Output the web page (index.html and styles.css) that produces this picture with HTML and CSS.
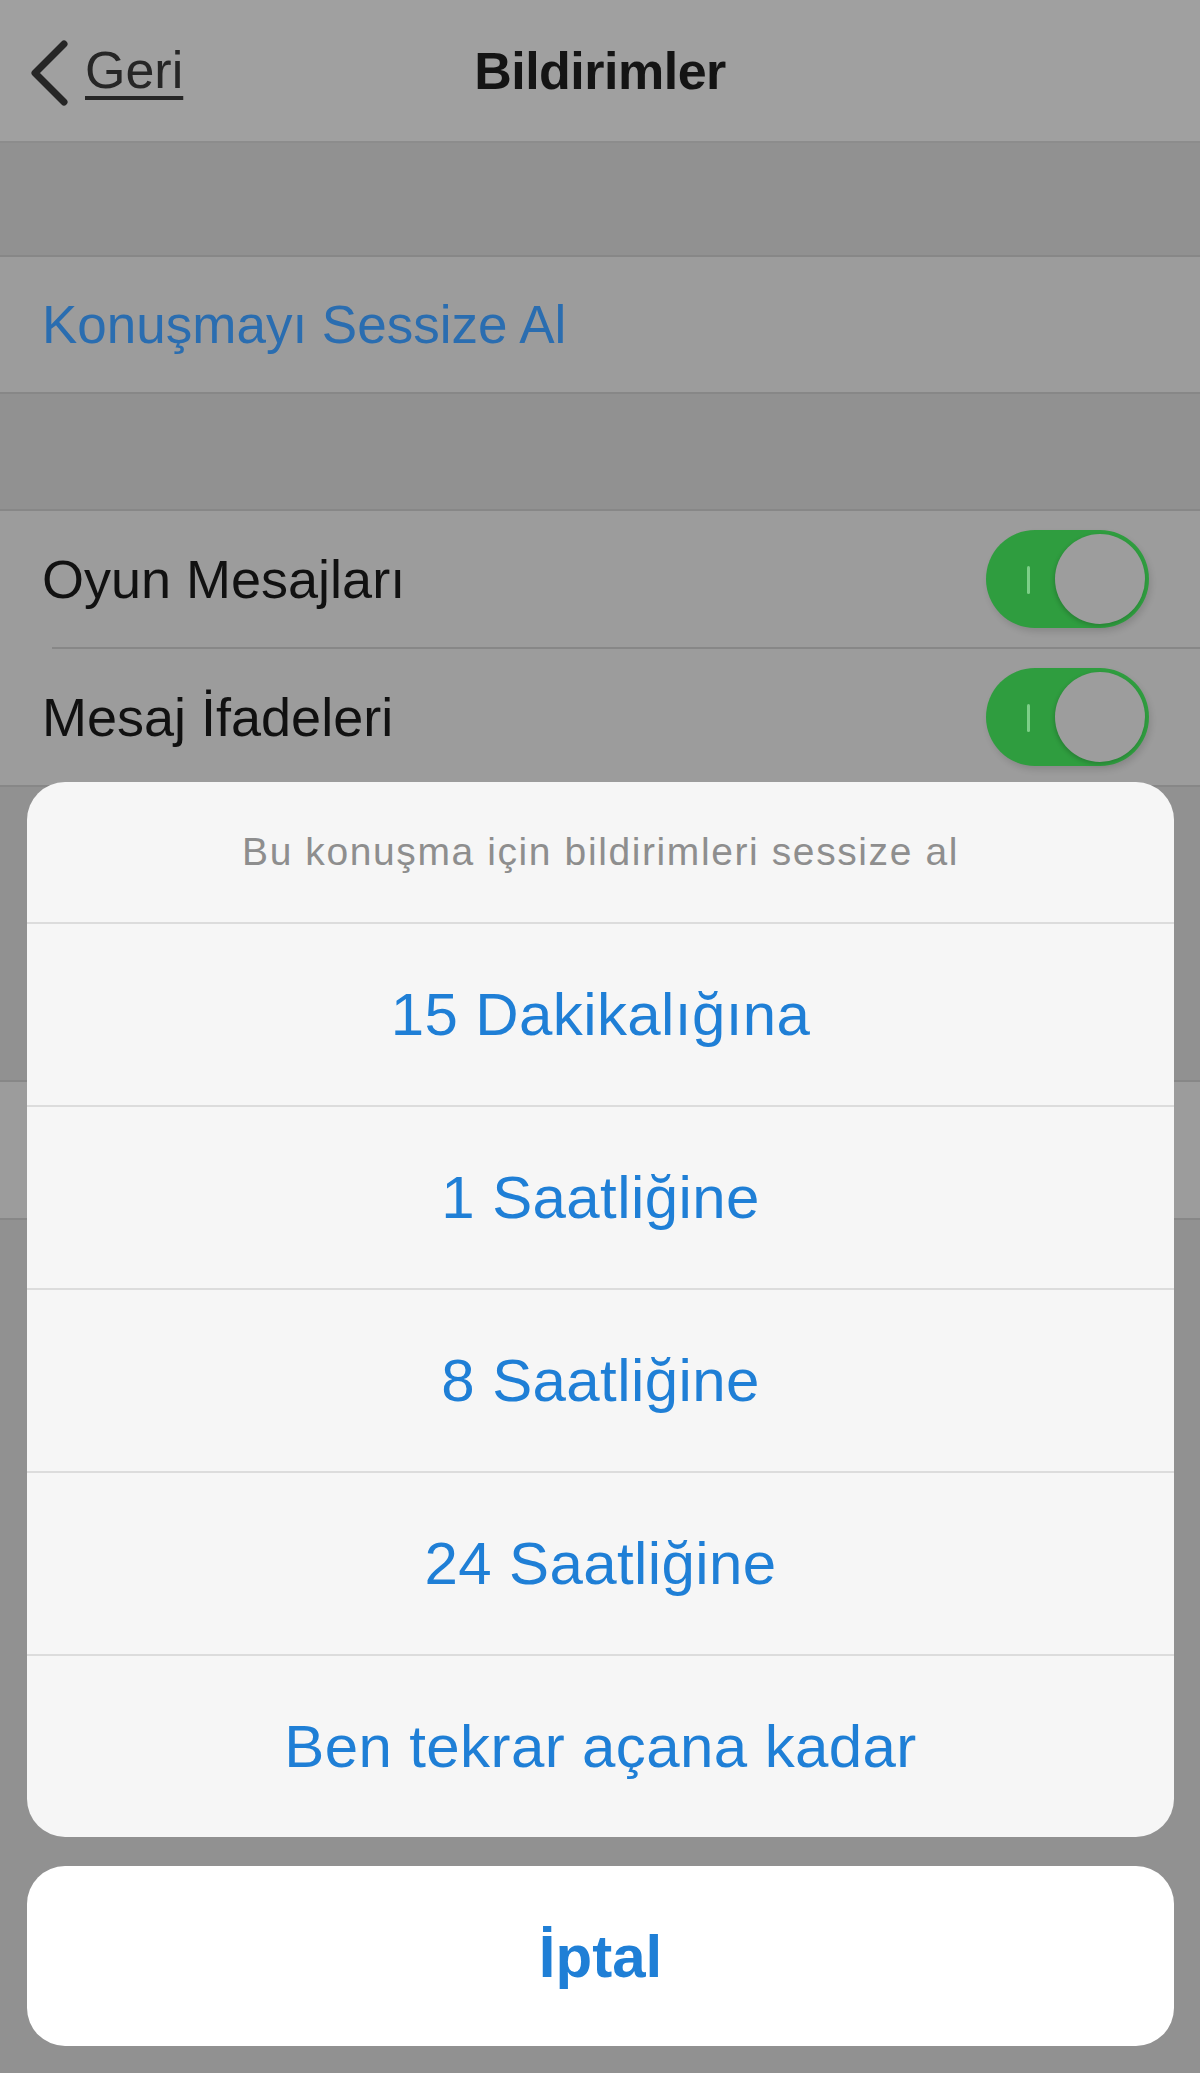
FILE: index.html
```html
<!DOCTYPE html>
<html lang="tr">
<head>
    <meta charset="UTF-8">
    <title>Bildirimler</title>
    <link rel="stylesheet" href="styles.css">
</head>
<body>
    <div class="screen">
        <header class="navbar">
            <a class="back" href="#">
                <svg class="chevron" width="40" height="66" viewBox="0 0 40 66">
                    <polyline points="35,4 6,33 35,62" fill="none" stroke="#262626" stroke-width="7" stroke-linecap="round" stroke-linejoin="round"/>
                </svg>
                <span class="back-label">Geri</span>
            </a>
            <h1>Bildirimler</h1>
            <span></span>
        </header>

        <div class="gap gap-top"></div>
        <div class="group">
            <div class="cell cell-link">Konuşmayı Sessize Al</div>
        </div>

        <div class="gap gap-mid"></div>
        <div class="group">
            <div class="cell">
                <span>Oyun Mesajları</span>
                <span class="switch"><span class="knob"></span></span>
            </div>
            <div class="divider"></div>
            <div class="cell">
                <span>Mesaj İfadeleri</span>
                <span class="switch"><span class="knob"></span></span>
            </div>
        </div>

        <div class="gap gap-low"></div>
        <div class="group">
            <div class="cell"></div>
        </div>

        <!-- mute options sheet -->
        <div class="sheet">
            <div class="sheet-group">
                <div class="sheet-title">Bu konuşma için bildirimleri sessize al</div>
                <button class="sheet-option">15 Dakikalığına</button>
                <button class="sheet-option">1 Saatliğine</button>
                <button class="sheet-option">8 Saatliğine</button>
                <button class="sheet-option">24 Saatliğine</button>
                <button class="sheet-option">Ben tekrar açana kadar</button>
            </div>
            <button class="sheet-cancel">İptal</button>
        </div>
    </div>
</body>
</html>
```

FILE: styles.css
```css
* {
    box-sizing: border-box;
}

body {
    margin: 0;
    background: #919191;
    font-family: 'Liberation Sans', Arial, sans-serif;
}

.screen {
    position: relative;
    min-height: 2073px;
    overflow: hidden;
}

/* top bar */
.navbar {
    display: grid;
    grid-template-columns: 1fr auto 1fr;
    align-items: center;
    height: 143px;
    background: #a0a0a0;
    border-bottom: 2px solid #8c8c8c;
}

.navbar h1 {
    margin: 0;
    font-size: 52px;
    font-weight: bold;
    color: #141414;
    letter-spacing: -0.5px;
}

.back {
    display: flex;
    align-items: center;
    gap: 16px;
    padding-left: 29px;
    padding-top: 4px;
    color: #262626;
    text-decoration: none;
}

.back-label {
    font-size: 52px;
    text-decoration: underline;
    text-decoration-thickness: 4px;
    text-underline-offset: 8px;
    margin-top: -6px;
}

/* table sections */
.gap-top {
    height: 112px;
}

.gap-mid {
    height: 115px;
}

.gap-low {
    height: 293px;
}

.group {
    background: #9c9c9c;
    border-top: 2px solid #878787;
    border-bottom: 2px solid #878787;
}

.cell {
    display: flex;
    align-items: center;
    justify-content: space-between;
    height: 136px;
    padding: 0 51px 0 42px;
    font-size: 54px;
    color: #111;
}

.cell-link {
    height: 135px;
    font-size: 53px;
    color: #2a6db0;
}

.divider {
    height: 2px;
    margin-left: 52px;
    background: #878787;
}

/* on/off switch */
.switch {
    display: flex;
    align-items: center;
    justify-content: flex-end;
    position: relative;
    width: 163px;
    height: 98px;
    padding-right: 4px;
    border-radius: 49px;
    background: #2f9d3f;
    box-shadow: 2px 4px 6px rgba(0, 0, 0, 0.12);
}

.switch::before {
    content: '';
    position: absolute;
    left: 41px;
    top: 36px;
    width: 3px;
    height: 28px;
    border-radius: 2px;
    background: #7dcf88;
}

.knob {
    width: 90px;
    height: 90px;
    border-radius: 50%;
    background: #9d9d9d;
    box-shadow: -1px 2px 4px rgba(0, 0, 0, 0.18);
}

/* action sheet */
.sheet {
    position: absolute;
    left: 27px;
    right: 26px;
    bottom: 27px;
    display: flex;
    flex-direction: column;
    gap: 29px;
}

.sheet-group {
    display: flex;
    flex-direction: column;
    background: #f6f6f6;
    border-radius: 38px;
    overflow: hidden;
}

.sheet-title {
    display: flex;
    align-items: center;
    justify-content: center;
    height: 140px;
    font-size: 39px;
    letter-spacing: 1.6px;
    color: #8e8e8e;
}

.sheet-option, .sheet-cancel {
    height: 183px;
    border: none;
    border-top: 2px solid #dcdcdc;
    background: transparent;
    font-family: 'Liberation Sans', Arial, sans-serif;
    font-size: 60px;
    letter-spacing: 0.4px;
    color: #1f7fd6;
    cursor: pointer;
}

.sheet-cancel {
    height: 180px;
    border-top: none;
    border-radius: 38px;
    background: #ffffff;
    font-size: 60px;
    font-weight: bold;
    letter-spacing: 0;
}
```
